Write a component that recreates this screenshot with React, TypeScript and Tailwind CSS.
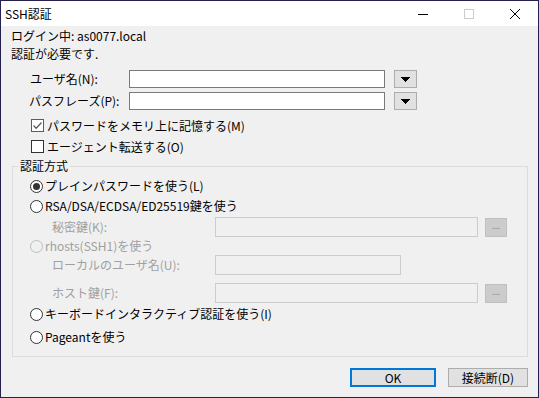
import React from 'react';

const DISABLED = 'text-[#a0a0a0]';

function Checkbox({ checked, label }: { checked?: boolean; label: string }) {
  return (
    <div className="flex h-[21px] items-center pl-[30px]">
      <span
        className={`flex h-[13px] w-[13px] items-center justify-center border bg-white ${checked ? 'border-[#5c5c5c]' : 'border-[#333333]'}`}
      >
        {checked && (
          <svg width="11" height="11" viewBox="0 0 11 11">
            <path d="M1.5 5.5 L4.2 8.2 L9.5 2.5" fill="none" stroke="#5c5c5c" strokeWidth="1.3" />
          </svg>
        )}
      </span>
      <span className="ml-[3px]">{label}</span>
    </div>
  );
}

function Radio({ checked, disabled, label, className = '' }: { checked?: boolean; disabled?: boolean; label: string; className?: string }) {
  return (
    <div className={`flex h-[20px] items-center pl-[17px] ${className}`}>
      <span
        className={`flex h-[13px] w-[13px] items-center justify-center rounded-full border ${disabled ? 'border-[#bcbcbc] bg-[#f0f0f0]' : 'border-[#333333] bg-white'}`}
      >
        {checked && <span className="h-[7px] w-[7px] rounded-full bg-[#333333]" />}
      </span>
      <span className={`ml-[2px] ${disabled ? DISABLED : ''}`}>{label}</span>
    </div>
  );
}

function DropButton() {
  return (
    <button
      type="button"
      className="ml-[9px] flex h-[18px] w-[23px] items-center justify-center border border-[#adadad] bg-[#e1e1e1]"
    >
      <svg width="9" height="5" viewBox="0 0 9 5" shapeRendering="crispEdges">
        <polygon points="0,0 9,0 4.5,5" fill="#000" />
      </svg>
    </button>
  );
}

function BrowseButton() {
  return (
    <button
      type="button"
      className="ml-[7px] flex h-[19px] w-[22px] items-center justify-center border border-[#bfbfbf] bg-[#cccccc] pb-[3px] text-[9px] leading-none text-[#838383]"
    >
      ...
    </button>
  );
}

function DisabledRow({ label, inputWidth, browse, className = '' }: { label: string; inputWidth: string; browse?: boolean; className?: string }) {
  return (
    <div className={`flex h-[20px] items-center pl-[39px] ${className}`}>
      <span className={`w-[163px] ${DISABLED}`}>{label}</span>
      <div className={`h-[20px] ${inputWidth} border border-[#cccccc] bg-[#f0f0f0]`} />
      {browse && <BrowseButton />}
    </div>
  );
}

export default function App() {
  return (
    <div className="flex h-[398px] w-[539px] flex-col border border-[#24214f] bg-[#f0f0f0] font-['Noto_Sans_CJK_JP',sans-serif] text-[12px] leading-none text-black">
      <div className="flex h-[25px] shrink-0 items-center bg-white">
        <span className="pl-[4px]">SSH認証</span>
        <div className="ml-auto flex h-full">
          <div className="flex w-[46px] items-center justify-center">
            <svg width="10" height="10" viewBox="0 0 10 10" shapeRendering="crispEdges">
              <line x1="0" y1="5.5" x2="10" y2="5.5" stroke="#000" strokeWidth="1" />
            </svg>
          </div>
          <div className="flex w-[46px] items-center justify-center">
            <svg width="10" height="10" viewBox="0 0 10 10" shapeRendering="crispEdges">
              <rect x="0.5" y="0.5" width="9" height="9" fill="none" stroke="#cccccc" strokeWidth="1" />
            </svg>
          </div>
          <div className="flex w-[46px] items-center justify-center">
            <svg width="10" height="10" viewBox="0 0 10 10">
              <path d="M0 0 L10 10 M10 0 L0 10" stroke="#000" strokeWidth="1" />
            </svg>
          </div>
        </div>
      </div>

      <div className="flex flex-1 flex-col pt-[1px]">
        <div className="flex h-[18px] items-center pl-[10px]">ログイン中: as0077.local</div>
        <div className="flex h-[18px] items-center pl-[10px]">認証が必要です.</div>

        <div className="mt-[7px] flex h-[18px] items-center pl-[29px]">
          <span className="w-[99px]">ユーザ名(N):</span>
          <div className="h-[18px] w-[256px] border border-[#7a7a7a] bg-white" />
          <DropButton />
        </div>
        <div className="mt-[4px] flex h-[18px] items-center pl-[28px]">
          <span className="w-[100px]">パスフレーズ(P):</span>
          <div className="h-[18px] w-[256px] border border-[#7a7a7a] bg-white" />
          <DropButton />
        </div>

        <div className="mt-[5px]">
          <Checkbox checked label="パスワードをメモリ上に記憶する(M)" />
          <Checkbox label="エージェント転送する(O)" />
        </div>

        <fieldset className="ml-[11px] mt-[1px] w-[516px] border border-[#dcdcdc] pb-[9px]">
          <legend className="ml-[5px] h-[16px] px-[2px] leading-[16px]">認証方式</legend>
          <Radio checked label="プレインパスワードを使う(L)" className="mt-[2px]" />
          <Radio label="RSA/DSA/ECDSA/ED25519鍵を使う" />
          <DisabledRow label="秘密鍵(K):" inputWidth="w-[263px]" browse className="mt-[1px]" />
          <Radio disabled label="rhosts(SSH1)を使う" className="!h-[18px]" />
          <DisabledRow label="ローカルのユーザ名(U):" inputWidth="w-[186px]" />
          <DisabledRow label="ホスト鍵(F):" inputWidth="w-[263px]" browse className="mt-[8px]" />
          <Radio label="キーボードインタラクティブ認証を使う(I)" className="mt-[1px]" />
          <Radio label="Pageantを使う" className="mt-[3px]" />
        </fieldset>

        <div className="mt-[11px] flex justify-end gap-[12px] pr-[10px]">
          <button type="button" className="flex h-[19px] w-[86px] items-center justify-center border-2 border-[#0078d7] bg-[#e1e1e1]">
            OK
          </button>
          <button type="button" className="flex h-[19px] w-[80px] items-center justify-center border border-[#adadad] bg-[#e1e1e1]">
            接続断(D)
          </button>
        </div>
      </div>
    </div>
  );
}
